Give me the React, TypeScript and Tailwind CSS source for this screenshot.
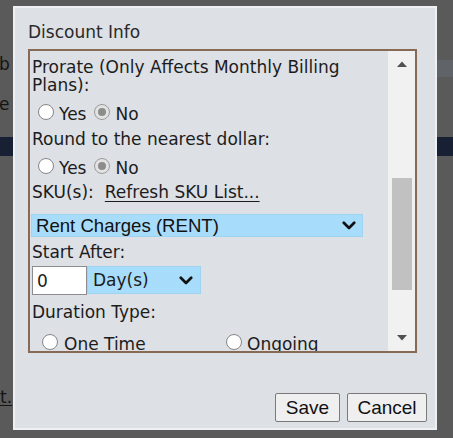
import React from "react";

function Radio({ checked = false }: { checked?: boolean }) {
  return (
    <span
      className={`mb-[5px] flex h-4 w-4 shrink-0 items-center justify-center rounded-full border ${
        checked ? "border-[#9b9b9b] bg-[#e2e2e2]" : "border-[#858585] bg-white"
      }`}
    >
      {checked && <span className="h-2 w-2 rounded-full bg-[#8c8c8c]" />}
    </span>
  );
}

function Chevron() {
  return (
    <svg width="14" height="9" viewBox="0 0 14 9" className="shrink-0">
      <path
        d="M1.8 1.8 L7 7 L12.2 1.8"
        fill="none"
        stroke="#111"
        strokeWidth="2.7"
        strokeLinecap="round"
        strokeLinejoin="round"
      />
    </svg>
  );
}

function YesNo() {
  return (
    <div className="flex h-[22px] items-center pl-[6px]">
      <Radio />
      <span className="ml-[5px]">Yes</span>
      <span className="ml-[8px]">
        <Radio checked />
      </span>
      <span className="ml-[5px]">No</span>
    </div>
  );
}

export default function App() {
  return (
    <div className="relative h-[438px] w-[453px] overflow-hidden bg-[#5a5a5a] font-['DejaVu_Sans',sans-serif] text-[17px] leading-[18px] text-[#1c1c1c]">
      {/* page under the overlay */}
      <div className="absolute left-[437px] right-0 top-[60px] h-[17px] bg-[#606368]" />
      <div className="absolute left-0 right-0 top-[137px] h-[19px] bg-[#172133]" />
      <span className="absolute left-[-1px] top-[55px] text-[#141414]">b</span>
      <span className="absolute left-[-1px] top-[95px] text-[#141414]">e</span>
      <span className="absolute left-0 top-[388px] text-[#141414] underline underline-offset-[2px]">t.</span>

      {/* dialog */}
      <div className="absolute left-[13px] top-[6px] flex h-[424px] w-[424px] flex-col border-2 border-[#eef0f3] bg-[#dde0e5]">
        <div className="ml-[13px] mt-[15px] text-[#2a2a2a]">Discount Info</div>

        <div className="ml-[13px] mt-[8px] flex h-[304px] w-[389px] border-2 border-[#876a55]">
          <div className="flex-1 overflow-hidden pl-[2px] pt-[7px]">
            <div>Prorate (Only Affects Monthly Billing Plans):</div>
            <div className="mt-[9px]">
              <YesNo />
            </div>
            <div className="mt-[5px]">Round to the nearest dollar:</div>
            <div className="mt-[9px]">
              <YesNo />
            </div>
            <div className="mt-[4px] flex">
              <span>SKU(s):</span>
              <span className="ml-[11px] underline underline-offset-[3px]">Refresh SKU List...</span>
            </div>
            <div className="-ml-[1px] mt-[13px] flex h-[23px] w-[332px] items-center justify-between border border-[#9ed3f3] bg-[#a8dcfb] pl-[4px] pr-[6px] font-['Liberation_Sans',Arial,sans-serif] text-[18.6px] leading-[21px] text-[#111]">
              <span>Rent Charges (RENT)</span>
              <Chevron />
            </div>
            <div className="mt-[6px]">Start After:</div>
            <div className="mt-[5px] flex">
              <div className="flex h-[29px] w-[55px] items-center border border-[#8d8d8d] bg-white pl-[4px]">0</div>
              <div className="flex h-[28px] w-[114px] items-center justify-between border border-[#9ed3f3] bg-[#a8dcfb] pl-[5px] pr-[7px]">
                <span>Day(s)</span>
                <Chevron />
              </div>
            </div>
            <div className="mt-[8px]">Duration Type:</div>
            <div className="mt-[12px] flex h-[22px] items-center pl-[10px]">
              <div className="flex w-[184px] items-center">
                <Radio />
                <span className="ml-[6px]">One Time</span>
              </div>
              <Radio />
              <span className="ml-[5px]">Ongoing</span>
            </div>
          </div>

          <div className="flex w-[27px] flex-col bg-[#f1f1f1]">
            <div className="flex h-[26px] items-center justify-center pl-[1px]">
              <svg width="10" height="6" viewBox="0 0 10 6">
                <path d="M0 6 L5 0.5 L10 6 Z" fill="#505050" />
              </svg>
            </div>
            <div className="h-[101px]" />
            <div className="ml-[4px] h-[112px] w-[20px] bg-[#c1c1c1]" />
            <div className="flex-1" />
            <div className="flex h-[26px] items-center justify-center pl-[1px]">
              <svg width="10" height="6" viewBox="0 0 10 6">
                <path d="M0 0 L5 5.5 L10 0 Z" fill="#505050" />
              </svg>
            </div>
          </div>
        </div>

        <div className="mr-[8px] mt-[40px] flex justify-end gap-[7px] font-['Liberation_Sans',Arial,sans-serif] text-[19px] text-[#111]">
          <button className="flex h-[29px] w-[65px] items-center justify-center rounded-[2px] border border-[#7a7a7a] bg-[#efefef]">
            Save
          </button>
          <button className="flex h-[29px] w-[80px] items-center justify-center rounded-[2px] border border-[#7a7a7a] bg-[#efefef]">
            Cancel
          </button>
        </div>
      </div>
    </div>
  );
}
